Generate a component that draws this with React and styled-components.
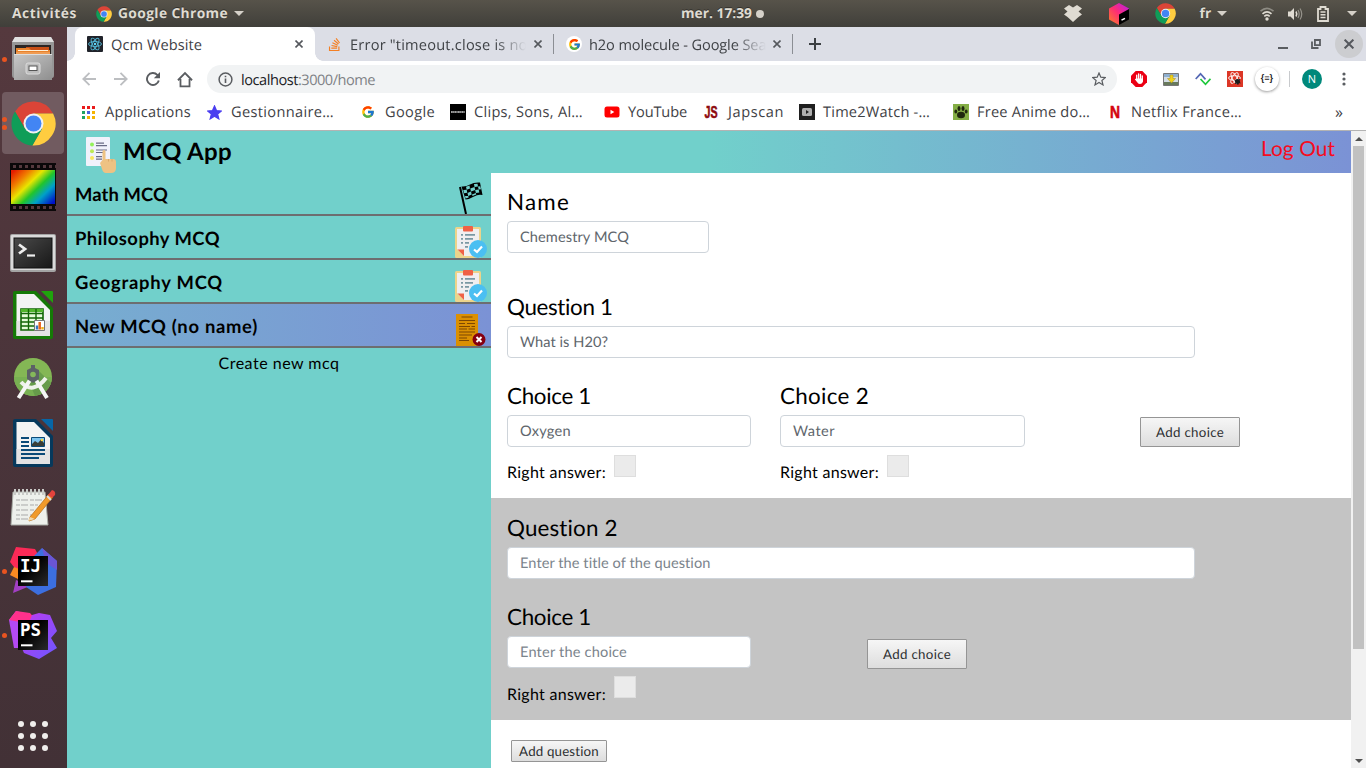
import React, { useLayoutEffect, useRef, useState } from "react";
import styled, { createGlobalStyle, css } from "styled-components";
import { FcGoogle } from "react-icons/fc";
import { FaStackOverflow } from "react-icons/fa";

const GlobalStyle = createGlobalStyle`
  *, *::before, *::after { box-sizing: border-box; }
  html, body, #root { height: 100%; }
  body { margin: 0; overflow: hidden; background: #fff; }
  button, input { font: inherit; }
  svg { flex: none; }
`;

const uiFont = `"Open Sans", "Noto Sans", sans-serif`;
const pageFont = `Lato, "Open Sans", sans-serif`;

/* ---------- text fitted to a given advance width ---------- */

const FitSpan = styled.span`
  display: inline-block;
  white-space: pre;
  text-rendering: geometricPrecision;
`;

function Fit({ w, children }) {
  const ref = useRef(null);
  const [spacing, setSpacing] = useState(0);
  useLayoutEffect(() => {
    const natural = ref.current.getBoundingClientRect().width;
    const count = Math.max(1, ref.current.textContent.length);
    setSpacing((w - natural) / count);
  }, [w]);
  return (
    <FitSpan ref={ref} style={{ letterSpacing: `${spacing}px` }}>
      {children}
    </FitSpan>
  );
}

/* ---------- desktop ---------- */

const Desktop = styled.div`
  width: 1366px;
  height: 768px;
  display: flex;
  flex-direction: column;
  overflow: hidden;
  font-family: ${uiFont};
`;

const TopBar = styled.header`
  height: 27px;
  flex: none;
  display: grid;
  grid-template-columns: 681px 1fr 310px;
  align-items: center;
  background: linear-gradient(#57534a, #403f3a);
  color: #dfdbd2;
  font-size: 13.8px;
  font-weight: 700;
  line-height: 26px;
  text-shadow: 0 -1px 0 rgba(0, 0, 0, 0.4);
`;

const TopLeft = styled.div`
  display: flex;
  align-items: center;
  padding-left: 12px;
`;

const AppMenu = styled.div`
  display: flex;
  align-items: center;
  margin-left: 19px;
  gap: 6px;
`;

const Clock = styled.div`
  display: flex;
  align-items: center;
  gap: 4px;
`;

const ClockDot = styled.span`
  width: 8px;
  height: 8px;
  border-radius: 50%;
  background: #d5d1c9;
`;

const Caret = styled.span`
  border: 5px solid transparent;
  border-top-color: #d5d1c9;
  border-bottom: 0;
`;

const Tray = styled.div`
  display: flex;
  align-items: center;
  height: 26px;
`;

const TrayItem = styled.div`
  width: ${(p) => p.$w}px;
  display: flex;
  align-items: center;
  justify-content: center;
  gap: 5px;
`;

const Body = styled.div`
  flex: 1;
  min-height: 0;
  display: flex;
`;

const Dock = styled.nav`
  width: 67px;
  flex: none;
  display: flex;
  flex-direction: column;
  background: linear-gradient(#55393e, #4c353b 40%, #423136);
`;

const DockSlot = styled.div`
  position: relative;
  height: 64px;
  display: flex;
  align-items: center;
  justify-content: center;
  padding-right: 1px;
  svg { position: relative; display: block; }
  ${(p) =>
    p.$active &&
    css`
      &::before {
        content: "";
        position: absolute;
        inset: 1px 3px 1px 2px;
        border-radius: 4px;
        background: #715b60;
      }
    `}
`;

const Pips = styled.div`
  position: absolute;
  left: 2px;
  top: 0;
  height: 64px;
  display: flex;
  flex-direction: column;
  justify-content: center;
  gap: 3px;
`;

const Pip = styled.i`
  width: 5px;
  height: 5px;
  border-radius: 50%;
  background: #e95420;
`;

const AppsGrid = styled.div`
  margin: 54px 0 0 18px;
  width: 30px;
  display: grid;
  grid-template-columns: repeat(3, 6px);
  gap: 6px;
  i { width: 6px; height: 6px; border-radius: 50%; background: #f0eeec; }
`;

/* ---------- browser ---------- */

const Browser = styled.section`
  flex: 1;
  min-width: 0;
  display: flex;
  flex-direction: column;
  background: #fff;
  color: #3f4246;
  font-size: 14.6px;
`;

const TabStrip = styled.div`
  height: 34px;
  flex: none;
  display: flex;
  align-items: center;
  background: #dcdee6;
  padding-left: 8px;
`;

const Tab = styled.div`
  position: relative;
  width: ${(p) => p.$w}px;
  height: 34px;
  display: flex;
  align-items: center;
  padding-left: 12px;
  gap: ${(p) => p.$gap || 8}px;
  line-height: 34px;
  ${(p) =>
    p.$active &&
    css`
      background: #fff;
      border-radius: 8px 8px 0 0;
      &::before, &::after {
        content: "";
        position: absolute;
        bottom: 0;
        width: 8px;
        height: 8px;
      }
      &::before { left: -8px; background: radial-gradient(circle at 0 0, transparent 7.5px, #fff 8px); }
      &::after { right: -8px; background: radial-gradient(circle at 100% 0, transparent 7.5px, #fff 8px); }
    `}
`;

const TabTitle = styled.div`
  width: ${(p) => p.$w}px;
  overflow: hidden;
  white-space: nowrap;
  ${(p) => p.$fade && css`mask-image: linear-gradient(90deg, #000 82%, transparent);`}
`;

const TabDivider = styled.i`
  width: 1px;
  height: 20px;
  background: #8b8e94;
`;

const NewTab = styled.div`
  flex: 1;
  padding-left: 16px;
  display: flex;
`;

const WindowButtons = styled.div`
  display: grid;
  grid-template-columns: 32px 33px 33px;
  justify-items: center;
  align-items: center;
  margin-right: 1px;
`;

const CloseWindow = styled.div`
  width: 28px;
  height: 28px;
  border-radius: 50%;
  background: #cccdd0;
  display: grid;
  place-items: center;
`;

const Toolbar = styled.div`
  height: 36px;
  flex: none;
  display: flex;
  align-items: center;
  padding-left: 6px;
`;

const ToolCell = styled.div`
  width: 32px;
  flex: none;
  display: grid;
  place-items: center;
`;

const Omnibox = styled.div`
  width: 910px;
  height: 28px;
  margin: 0 6px 0 6px;
  padding: 0 11px 0 11px;
  border-radius: 14px;
  background: #f1f3f4;
  display: flex;
  align-items: center;
  color: #202124;
`;

const Url = styled.div`
  flex: 1;
  margin-left: 8px;
  line-height: 28px;
  span + span { color: #7f8286; }
`;

const ToolDivider = styled.i`
  width: 1px;
  height: 16px;
  margin: 0 6px 0 6px;
  background: #c8cacd;
`;

const Avatar = styled.div`
  width: 20px;
  height: 20px;
  border-radius: 50%;
  background: #00897b;
  color: #fff;
  font-size: 11px;
  line-height: 20px;
  text-align: center;
`;

const JsonBadge = styled.div`
  width: 24px;
  height: 24px;
  border-radius: 50%;
  background: #fff;
  box-shadow: 0 1px 3px rgba(0, 0, 0, 0.4);
  color: #222;
  font: 700 9px/23px "Liberation Sans", sans-serif;
  text-align: center;
`;

const Bookmarks = styled.div`
  height: 34px;
  flex: none;
  display: flex;
  align-items: center;
  padding: 0 0 3px 14px;
  border-bottom: 1px solid #b3b3b3;
  line-height: 30px;
`;

const Bookmark = styled.div`
  width: ${(p) => p.$w}px;
  flex: none;
  display: flex;
  align-items: center;
  gap: ${(p) => p.$gap || 8}px;
`;

const More = styled.div`
  flex: 1;
  padding-left: 74px;
  font-size: 16px;
`;

/* ---------- web page ---------- */

const Viewport = styled.div`
  flex: 1;
  min-height: 0;
  display: flex;
  font-family: ${pageFont};
  color: #000;
`;

const Page = styled.div`
  width: 1284px;
  display: flex;
  flex-direction: column;
`;

const PageHeader = styled.header`
  height: 42px;
  flex: none;
  display: flex;
  align-items: flex-end;
  padding: 0 16px 0 18px;
  background: linear-gradient(90deg, #71d0cb 50%, #7b92d5);
`;

const Brand = styled.h1`
  flex: 1;
  margin: 0 0 0 6px;
  font-size: 24px;
  font-weight: 700;
  line-height: 42px;
`;

const LogOut = styled.a`
  color: #f60c20;
  font-size: 20.8px;
  line-height: 34px;
  align-self: flex-start;
`;

const Columns = styled.div`
  flex: 1;
  min-height: 0;
  display: flex;
`;

const Sidebar = styled.aside`
  width: 424px;
  flex: none;
  background: #71d0cb;
`;

const QuizItem = styled.div`
  height: ${(p) => (p.$first ? 43 : 44)}px;
  display: flex;
  align-items: flex-end;
  justify-content: space-between;
  padding: 0 4px 0 8px;
  border-bottom: 2px solid #6d6e70;
  font-size: 18.4px;
  font-weight: 700;
  line-height: 39px;
  background: ${(p) => (p.$selected ? "linear-gradient(90deg, #77aed0, #7b92d5)" : "transparent")};
  svg { display: block; }
`;

const CreateLink = styled.div`
  text-align: center;
  font-size: 16px;
  line-height: 30px;
`;

const Editor = styled.main`
  flex: 1;
  min-width: 0;
  background: #fff;
`;

const NameBlock = styled.div`
  height: 103px;
  padding: 16px 16px 0;
`;

const QuestionBlock = styled.section`
  height: 222px;
  padding: ${(p) => (p.$shaded ? 17 : 18)}px 24px 0 16px;
  background: ${(p) => (p.$shaded ? "#c4c4c4" : "transparent")};
`;

const FieldLabel = styled.label`
  display: block;
  height: 32px;
  font-size: 22.4px;
  line-height: 26px;
`;

const Input = styled.div`
  width: ${(p) => p.$w}px;
  height: 32px;
  padding: 0 12px;
  border: 1px solid #ced4da;
  border-radius: 4px;
  background: #fff;
  color: ${(p) => (p.$placeholder ? "#7b848c" : "#60666c")};
  font-size: 14.6px;
  line-height: 30px;
`;

const Choices = styled.div`
  display: grid;
  grid-template-columns: repeat(3, 273px);
  margin-top: 25px;
`;

const Answer = styled.div`
  display: flex;
  margin-top: 8px;
  gap: 8px;
  font-size: 16px;
  line-height: ${(p) => (p.$low ? 38 : 36)}px;
  height: 22px;
`;

const CheckBox = styled.span`
  width: 22px;
  height: 22px;
  border: 1px solid #dedede;
  background: #ebebeb;
`;

const Button = styled.button`
  display: block;
  width: ${(p) => p.$w}px;
  height: ${(p) => p.$h}px;
  margin: ${(p) => p.$m};
  padding: 0;
  border: 1px solid #959595;
  border-radius: 1px;
  background: linear-gradient(#f6f6f6, #dddddd);
  color: #2d2f31;
  font-size: 13.3px;
  line-height: ${(p) => p.$h - 2}px;
`;

const Scrollbar = styled.div`
  width: 15px;
  background: #f1f1f1;
  display: flex;
  flex-direction: column;
  align-items: center;
`;

const ScrollArrow = styled.div`
  height: 15px;
  display: grid;
  place-items: center;
`;

const ScrollThumb = styled.div`
  width: 11px;
  height: 503px;
  background: #c1c1c1;
`;

const ScrollTrack = styled.div`
  flex: 1;
`;

/* ---------- icons ---------- */

const Chrome = ({ size }) => (
  <svg width={size} height={size} viewBox="1.5 1.5 45 45">
    <path fill="#db4437" d="M5.54 12.03A22 22 0 0 1 43.6 14H24L15.34 29Z" />
    <path fill="#ffcd40" d="M43.6 14A22 22 0 0 1 22.86 45.97L32.66 29 24 14Z" />
    <path fill="#0f9d58" d="M22.86 45.97A22 22 0 0 1 5.54 12.03L15.34 29H32.66Z" />
    <circle cx="24" cy="24" r="10" fill="#f1f1f1" />
    <circle cx="24" cy="24" r="8" fill="#4285f4" />
  </svg>
);

const Dropbox = () => (
  <svg width="18" height="17" viewBox="0 0 18 17" fill="#dfdbd2">
    <path d="M5 0 9 2.500 13 0 18 3.500 14.500 6.500 18 9.500 14.500 12 9 17 3.500 12 0 9.500 3.500 6.500 0 3.500Z" />
  </svg>
);

const Toolbox = () => (
  <svg width="20" height="22" viewBox="0 0 20 22">
    <defs>
      <linearGradient id="tb" x1="0" y1="1" x2="1" y2="0">
        <stop offset="0" stopColor="#fd8224" />
        <stop offset=".5" stopColor="#fe2d75" />
        <stop offset="1" stopColor="#b51bf0" />
      </linearGradient>
    </defs>
    <path fill="url(#tb)" d="M10 0 20 5.500V11L10 22 0 16.500V5.500Z" />
    <path d="M10 11.500 20 6V16.500L10 22Z" fill="#000" />
    <path d="M12.500 17.200 16 15.300" stroke="#fff" strokeWidth="1.500" />
  </svg>
);

const Wifi = () => (
  <svg width="16" height="14" viewBox="0 0 16 14" fill="none" stroke="#dfdbd2" strokeWidth="1.600">
    <path d="M1.500 4.200Q8-1.300 14.500 4.200" stroke="#8d8b83" />
    <path d="M3.500 6.800Q8 2.800 12.500 6.800M5.300 9.300Q8 7.100 10.700 9.300" />
    <circle cx="8" cy="12" r="1.700" fill="#dfdbd2" stroke="none" />
  </svg>
);

const Volume = () => (
  <svg width="16" height="14" viewBox="0 0 16 14" fill="none" stroke="#dfdbd2">
    <path d="M1 4.500H3.500L7 1V13L3.500 9.500H1Z" fill="#dfdbd2" stroke="none" />
    <path d="M9 4.500Q10.500 7 9 9.500" strokeWidth="1.500" />
    <path d="M11 3Q13.300 7 11 11M13 1.500Q16.500 7 13 12.500" stroke="#96938b" strokeWidth="1.200" />
  </svg>
);

const Battery = () => (
  <svg width="12" height="16" viewBox="0 0 12 16" fill="none" stroke="#dfdbd2">
    <path d="M1 3H3.500V1H8.500V3H11V15H1Z" strokeWidth="1.800" />
    <path d="M3.500 6H8.500M3.500 8.800H8.500M3.500 11.600H8.500" strokeWidth="1.500" />
  </svg>
);

const Files = () => (
  <svg width="42" height="44" viewBox="0 0 42 44">
    <defs>
      <linearGradient id="fi" x1="0" y1="0" x2="1" y2="1">
        <stop offset="0" stopColor="#c8c8c8" />
        <stop offset="1" stopColor="#8f8f8f" />
      </linearGradient>
    </defs>
    <path d="M3 0H39L42 5V38Q42 41 40 41H2Q0 41 0 38V5Z" fill="#969696" />
    <path d="M3 0H39L42 5H0Z" fill="#e0e0e0" />
    <rect x="3" y="8" width="36" height="11" fill="#2b2523" />
    <path d="M14 10H37V18H14Z" fill="#c84f17" />
    <path d="M4 11H17L19 13H38V18H4Z" fill="#e8822c" />
    <path d="M6 13.500H36" stroke="#fff0d8" />
    <path d="M4 16H38" stroke="#f7b57a" />
    <path d="M2 17H40V43H2Z" fill="url(#fi)" />
    <path d="M2 17.500H40" stroke="#dedede" />
    <rect x="14" y="26" width="14" height="11" rx="2" fill="#bdbdbd" stroke="#ddd" />
    <rect x="17" y="29" width="8" height="4.500" fill="#fff" stroke="#555" />
  </svg>
);

const Film = () => (
  <svg width="46" height="48" viewBox="0 0 46 48">
    <defs>
      <linearGradient id="fm" x1="0" y1=".1" x2="1" y2=".9">
        <stop offset="0" stopColor="#e41c00" />
        <stop offset=".22" stopColor="#f07d00" />
        <stop offset=".4" stopColor="#e8e600" />
        <stop offset=".58" stopColor="#22c52a" />
        <stop offset=".76" stopColor="#00a0c8" />
        <stop offset="1" stopColor="#0012c8" />
      </linearGradient>
    </defs>
    <path fill="#0b0809" d="M0 0H46V48H0Z" />
    <path fill="url(#fm)" d="M1 7H45V41H1Z" />
    <path d="M3 3.500H46M3 44.500H46" stroke="#55393e" strokeWidth="3" strokeDasharray="3 3" />
  </svg>
);

const Terminal = () => (
  <svg width="46" height="42" viewBox="0 -4 46 42">
    <defs>
      <linearGradient id="tm" x1="0" y1="0" x2="1" y2="1">
        <stop offset="0" stopColor="#4a4a4a" />
        <stop offset="1" stopColor="#171717" />
      </linearGradient>
    </defs>
    <rect width="46" height="38" rx="2" fill="#a4a4a4" />
    <rect x="1" y="1" width="44" height="35" rx="1" fill="#dadada" />
    <rect x="4" y="4" width="38" height="30" fill="url(#tm)" stroke="#111" />
    <path d="M9 10.500 15 15 9 19.500" fill="none" stroke="#eee" strokeWidth="2.800" />
    <path d="M17 21.500H25" stroke="#eee" strokeWidth="2.200" />
  </svg>
);

const OfficeDoc = ({ dark, main, children }) => (
  <svg width="40" height="48" viewBox="0 0 40 48">
    <path d="M2 0H23L40 17V46Q40 48 38 48H2Q0 48 0 46V2Q0 0 2 0Z" fill={dark} />
    <path d="M28 0H39Q40 0 40 1V12Z" fill={main} />
    <path d="M3.500 3H21L37 19V45H3.500Z" fill="#f3f3f3" />
    <path d="M3.500 30H37V45H3.500Z" fill="#e3e3e3" />
    {children}
  </svg>
);

const Calc = () => (
  <OfficeDoc dark="#157a06" main="#1fa40c">
    <path d="M8 18H30V39H8Z" fill="#e6fbd9" stroke="#126605" strokeWidth="1.600" />
    <path d="M8 19.500H30" stroke="#52b52c" strokeWidth="3" />
    <path d="M8 22.500H30M8 27H30M8 31H30M8 35H30M15.500 18V39M23 18V39" stroke="#126605" strokeWidth="1.400" />
    <path d="M21.500 29.500H31.500V39.500H21.500Z" fill="#fff" stroke="#777" />
    <path d="M24 38.500V34.500" stroke="#3474c0" strokeWidth="2.500" />
    <path d="M26.700 38.500V31" stroke="#e8641b" strokeWidth="2.500" />
    <path d="M29.500 38.500V36" stroke="#f2b41b" strokeWidth="2.500" />
  </OfficeDoc>
);

const Writer = () => (
  <OfficeDoc dark="#06395c" main="#0766a6">
    <path d="M8 19H16M8 23H16M8 27H16M8 31H32M8 35H32M8 39H26" stroke="#0a4a78" strokeWidth="2" />
    <path d="M18.500 18.500H31.500V27.500H18.500Z" fill="#7cc3ee" stroke="#0a4a78" />
    <path d="M19 27V25L22 22 25 24 28 20.500 31 24V27Z" fill="#3a3f39" />
    <circle cx="29" cy="21" r="1.300" fill="#fbd83c" />
  </OfficeDoc>
);

const AndroidStudio = () => (
  <svg width="40" height="42" viewBox="0 0 40 42">
    <circle cx="20" cy="19" r="19" fill="#84b755" />
    <path d="M1 19A19 19 0 0 0 39 19Z" fill="#78b052" />
    <path d="M26 13 38 25Q34 36 22 38L16 24Z" fill="#5e9347" opacity=".7" />
    <path d="M8 24Q20 37 33 20" fill="none" stroke="#eef2ea" strokeWidth="4" />
    <path d="M17 22 5.500 40M23 22 34 40" stroke="#f5f5f5" strokeWidth="4" />
    <path d="M18 7H22V10L26 12V21L20 25 14 21V12L18 10Z" fill="#5c6166" />
    <circle cx="20" cy="16.500" r="2.800" fill="#85b85a" />
  </svg>
);

const Notes = () => (
  <svg width="46" height="38" viewBox="0 0 46 38">
    <path d="M3 4H35L38 37H1Z" fill="#eef0ec" stroke="#a7aaa4" />
    <path d="M5 7V1M9 7V1M13 7V1M17 7V1M21 7V1M25 7V1M29 7V1M33 7V1" stroke="#c9cac7" strokeWidth="2" />
    <path d="M6 12H32M6 17H28M6 22H24M6 27H22M6 31H18" stroke="#a9a9a9" strokeDasharray="4 1 7 2" />
    <path d="M20 29 39 6 43 9 25 31 19 33Z" fill="#f09a2b" stroke="#b86c16" strokeWidth=".7" />
    <path d="M38 7 42 2Q46 3 45 7L42 10Z" fill="#e4433d" />
    <path d="M37 8 41 12" stroke="#ddd" strokeWidth="2" />
    <path d="M20 29 25 31 18 33Z" fill="#f3d8a8" />
  </svg>
);

const IdeLogo = ({ letters, children }) => (
  <svg width="50" height="50" viewBox="0 0 50 50">
    <defs>
      <linearGradient id="vi" x1="0" y1="0" x2="1" y2="1">
        <stop offset="0" stopColor="#c23af0" />
        <stop offset="1" stopColor="#6b57ff" />
      </linearGradient>
      <linearGradient id="bk" x1="0" y1="0" x2="1" y2="1">
        <stop offset=".4" stopColor="#000" />
        <stop offset="1" stopColor="#2b2b2b" />
      </linearGradient>
    </defs>
    {children}
    <path d="M10 10H40V40H10Z" fill="url(#bk)" />
    <text x="12" y="26.300" fill="#fff" fontFamily="DejaVu Sans Mono, monospace" fontWeight="700" fontSize="17.500" textLength="21">
      {letters}
    </text>
    <path d="M13 35.300H24.500" stroke="#fff" strokeWidth="2" />
  </svg>
);

const Idea = () => (
  <IdeLogo letters="IJ">
    <path d="M8 1 27 3 33 14 10 26 2 16Z" fill="#fb2a57" />
    <path d="M2 29 6 21 14 24 12 34Z" fill="#f98a22" />
    <path d="M8 34 5 47 22 40Z" fill="#a23fc4" />
    <path d="M34 2 49 15 48 41 30 49 18 41 24 12Z" fill="#3c6fe0" />
    <path d="M34 2 42 9 49 15 49 24 38 17Z" fill="#6a55d4" />
  </IdeLogo>
);

const PhpStorm = () => (
  <IdeLogo letters="PS">
    <path d="M1 10 8 1 20 4 26 20 12 38H6Z" fill="#b44af3" />
    <path d="M8 1 22 3 30 12 12 12 1 10Z" fill="#ff318c" />
    <path d="M24 5 31 3 42 5 49 21 43 28 49 38 31 49 16 43 12 34Z" fill="url(#vi)" />
  </IdeLogo>
);

const ReactTile = () => (
  <svg width="16" height="16" viewBox="0 0 16 16" fill="none" stroke="#53b9d8" strokeWidth=".9">
    <rect width="16" height="16" rx="1" fill="#20232a" stroke="none" />
    <ellipse cx="8" cy="8" rx="6.500" ry="2.500" />
    <ellipse cx="8" cy="8" rx="6.500" ry="2.500" transform="rotate(60 8 8)" />
    <ellipse cx="8" cy="8" rx="6.500" ry="2.500" transform="rotate(120 8 8)" />
    <circle cx="8" cy="8" r="1.200" fill="#61dafb" stroke="none" />
  </svg>
);

const Cross = ({ size = 8, width = 1.6 }) => (
  <svg width={size} height={size} viewBox="0 0 8 8" stroke="#55585d" strokeWidth={width}>
    <path d="M.5.500 7.500 7.500M7.500.500.500 7.500" />
  </svg>
);

const GoogleDisc = styled.span`
  width: 16px;
  height: 16px;
  border-radius: 50%;
  background: #fff;
  display: grid;
  place-items: center;
`;

const Plus = () => (
  <svg width="12" height="12" viewBox="0 0 12 12" stroke="#3c4043" strokeWidth="2">
    <path d="M6 0V12M0 6H12" />
  </svg>
);

const Arrow = ({ flip }) => (
  <svg width="14" height="14" viewBox="0 0 14 14" fill="none" stroke="#bcbec1" strokeWidth="1.800" transform={flip ? "scale(-1 1)" : undefined}>
    <path d="M14 7H1.500M7.500.800 1.300 7 7.500 13.200" />
  </svg>
);

const Reload = () => (
  <svg width="14" height="14" viewBox="0 0 14 14" fill="none" stroke="#5a5d61" strokeWidth="1.900">
    <path d="M12.800 8.500A6 6 0 1 1 11.300 2.800L12 3.500" />
    <path d="M14 0V6.200H7.800Z" fill="#5a5d61" stroke="none" />
  </svg>
);

const Home = () => (
  <svg width="16" height="17" viewBox="0 0 17 17" fill="none" stroke="#5a5d61" strokeWidth="1.900">
    <path d="M1 9.300 8.500 1.700 16 9.300M3.700 8V15.800H13.300V8" />
  </svg>
);

const Info = () => (
  <svg width="15" height="15" viewBox="0 0 15 15" fill="none" stroke="#5a5d61">
    <circle cx="7.500" cy="7.500" r="6.400" strokeWidth="1.500" />
    <path d="M7.500 6.500V11M7.500 3.800V5.300" strokeWidth="1.600" />
  </svg>
);

const Star = ({ fill = "none", stroke = "#5a5d61", size = 14 }) => (
  <svg width={size} height={size} viewBox="0 0 14 14" fill={fill} stroke={stroke} strokeWidth="1.200">
    <path d="M7 1 8.800 5.200 13.300 5.600 9.900 8.500 11 12.900 7 10.500 3 12.900 4.100 8.500.700 5.600 5.200 5.200Z" />
  </svg>
);

const AdBlock = () => (
  <svg width="16" height="16" viewBox="0 0 16 16">
    <path d="M4.700 0H11.300L16 4.700V11.300L11.300 16H4.700L0 11.300V4.700Z" fill="#eb0014" />
    <path d="M5.700 9V4.200M7.600 8V2.800M9.500 8V3.400M11.300 10V5" stroke="#fff" strokeWidth="1.300" strokeLinecap="round" />
    <path d="M5.100 7.500H12V10Q11.600 13 8.800 13 7 13 6 11L3.800 8.300Z" fill="#fff" />
  </svg>
);

const Picture = () => (
  <svg width="16" height="13" viewBox="0 0 16 13">
    <path d="M.5.500H15.500V12.500H.500Z" fill="#d3dde6" stroke="#777" />
    <path d="M1 1H15V4H1Z" fill="#8fb0d0" />
    <path d="M1 9H15V12H1Z" fill="#687a5c" />
    <path d="M7 2H10V5.500H12.500L8.500 10 4.500 5.500H7Z" fill="#efd21c" stroke="#aa8b12" strokeWidth=".5" />
  </svg>
);

const Zigzag = () => (
  <svg width="16" height="14" viewBox="0 0 16 14" fill="none" strokeWidth="1.700">
    <path d="M.7 7 5.500 1.800 10.500 7.400" stroke="#5468b5" />
    <path d="M5.500 7 10.500 12.300 15.500 6.700" stroke="#1fc83c" />
  </svg>
);

const ReactBug = () => (
  <svg width="16" height="16" viewBox="0 0 16 16" fill="none">
    <rect width="16" height="16" fill="#dc3626" />
    <g stroke="#fff" strokeWidth=".9">
      <ellipse cx="7.500" cy="7" rx="6" ry="2.300" />
      <ellipse cx="7.500" cy="7" rx="6" ry="2.300" transform="rotate(60 7.500 7)" />
      <ellipse cx="7.500" cy="7" rx="6" ry="2.300" transform="rotate(120 7.500 7)" />
    </g>
    <circle cx="10.500" cy="10.500" r="2.500" fill="#1d1d1d" />
    <path d="M7.500 9 13.500 12M8 13 13 8M10 8 11 14" stroke="#1d1d1d" strokeWidth=".9" />
  </svg>
);

const Kebab = () => (
  <svg width="4" height="14" viewBox="0 0 4 14" fill="#5a5d61">
    <circle cx="2" cy="2" r="1.600" />
    <circle cx="2" cy="7" r="1.600" />
    <circle cx="2" cy="12" r="1.600" />
  </svg>
);

const AppsIcon = () => (
  <svg width="15" height="15" viewBox="0 0 15 15">
    {["#ea1c1c", "#ea1c1c", "#ea1c1c", "#1fa463", "#4a63e0", "#f5b400", "#1fa463", "#f5b400", "#f5b400"].map((c, i) => (
      <rect key={i} x={1 + (i % 3) * 5} y={1 + Math.floor(i / 3) * 5} width="3" height="3" fill={c} />
    ))}
  </svg>
);

const ClipsIcon = () => (
  <svg width="16" height="16" viewBox="0 0 16 16">
    <rect width="16" height="16" />
    <path d="M1 8H15" stroke="#cfcfcf" strokeWidth="1.600" strokeDasharray="1.800 .3 1.100 .3" />
  </svg>
);

const YouTubeIcon = () => (
  <svg width="16" height="16" viewBox="0 0 16 16">
    <rect x=".5" y="2.500" width="15" height="11" rx="2.500" fill="#f00" />
    <path d="M6.500 5.800 10.300 8 6.500 10.200Z" fill="#fff" />
  </svg>
);

const TextIcon = ({ text, color, width }) => (
  <svg width="16" height="16" viewBox="0 0 16 16" overflow="visible">
    <text x={(16 - width) / 2} y="14" fill={color} fontFamily="Liberation Sans, sans-serif" fontWeight="700" fontSize="17" textLength={width} lengthAdjust="spacingAndGlyphs" stroke={color} strokeWidth=".6">
      {text}
    </text>
  </svg>
);

const WatchIcon = () => (
  <svg width="16" height="16" viewBox="0 0 16 16">
    <rect width="16" height="16" fill="#1f1f1f" />
    <rect x="3" y="4" width="10" height="8" rx="1.500" fill="#aeaeae" />
    <path d="M7 6 10 8 7 10Z" fill="#1f1f1f" />
  </svg>
);

const PawIcon = () => (
  <svg width="16" height="16" viewBox="0 0 16 16">
    <rect width="16" height="16" fill="#84ae45" />
    <g fill="#20280f">
      <ellipse cx="8" cy="11" rx="4" ry="3.300" />
      <ellipse cx="2.800" cy="7.500" rx="1.400" ry="2.100" />
      <ellipse cx="6" cy="4.500" rx="1.500" ry="2.500" />
      <ellipse cx="10" cy="4.500" rx="1.500" ry="2.500" />
      <ellipse cx="13.200" cy="7.500" rx="1.400" ry="2.100" />
    </g>
  </svg>
);

const NetflixIcon = () => <TextIcon text="N" color="#d4060f" width={10} />;

const Minimize = () => (
  <svg width="10" height="12" viewBox="0 0 10 12"><path d="M0 10H10" stroke="#5a5d61" strokeWidth="2" /></svg>
);

const Restore = () => (
  <svg width="10" height="10" viewBox="0 0 10 10" fill="none" stroke="#5a5d61" strokeWidth="1.800">
    <path d="M3.900 1H9V6.100H3.900ZM1 2.500V9H7.500" />
  </svg>
);

const BrandIcon = () => (
  <svg width="32" height="36" viewBox="0 0 32 36">
    <rect x="1" y="0" width="24" height="29" rx="1" fill="#f1f1fb" />
    <circle cx="7" cy="7.500" r="2" fill="#93f15b" />
    <circle cx="7" cy="14.300" r="2" fill="#bdea55" />
    <circle cx="7" cy="21" r="2" fill="#f8e65e" />
    <path d="M11 6.200H19M11 8.700H22M11 13H22M11 15.500H19M11 19.700H17M11 22.200H17" stroke="#6a6b86" strokeWidth="1.200" />
    <path d="M17.500 14.500Q17.500 13 19 13T20.500 14.500V22H28Q31 22 31 25V31Q31 36 26 36H21Q18 36 17 32L15 26 17.500 23Z" fill="#eec283" />
    <path d="M23.500 22V24.500M27 22V24.500" stroke="#dca969" />
  </svg>
);

const FlagIcon = () => (
  <svg width="29" height="32" viewBox="0 0 29 32">
    <path d="M2 5 8 32" stroke="#000" strokeWidth="2" />
    <path d="M3.500 4.500Q8 5 12 2.500T22 .5L24.500 13Q20 12 16 14.500T7.500 17.500Z" fill="#000" />
    <g fill="#71d0cb">
      <path d="M8 4.800 11.500 3.500 12 6.500 8.700 7.800ZM16 2 19.500 1.700 20 4.500 16.500 5ZM5.300 8 8.700 7.800 9.300 10.800 6 11.200ZM12.300 6.500 16.500 5 17.200 8 13 9.500ZM20 4.500 22.300 4.300 23 7.200 20.700 7.500ZM9.500 11 13 9.500 13.700 12.500 10.200 14ZM17.200 8 20.700 7.500 21.300 10.500 17.900 11ZM7 14 10.200 14 10.700 15.500 7.500 16.500ZM14 12.500 17.900 11 18.200 12.500 14.500 14Z" />
    </g>
  </svg>
);

const ClipboardIcon = () => (
  <svg width="32" height="32" viewBox="0 0 32 32">
    <rect x="0" y="1" width="26" height="31" rx="1.500" fill="#ecd48b" />
    <path d="M2 3H24V30H9L2 23Z" fill="#f0eef0" />
    <path d="M2.500 23.500H9V30Z" fill="#ef6146" />
    <rect x="8" y="0" width="10" height="5.500" rx="1" fill="#ef6146" />
    <path d="M6 8.800H8M6 12.800H8M6 16.800H8M10 8.800H20M10 12.800H18M10 16.800H14M10 20.800H13" stroke="#7a98a3" strokeWidth="1.800" />
    <circle cx="23" cy="23" r="9" fill="#4bbff2" />
    <path d="M19 23.500 22 26 27 20.500" fill="none" stroke="#fff" strokeWidth="2.200" />
  </svg>
);

const DraftIcon = () => (
  <svg width="31" height="32" viewBox="0 0 31 32">
    <path d="M0 0H22V32H0Z" fill="#db9002" />
    <path d="M5.500 3H16.500M3 6.500H19M3 9.500H9M11 9.500H19M3 12.500H14M15.500 12.500H19M3 15H11M12.500 15H19M3 18H19M3 21H16M3 24H11M3 26.500H13" stroke="#7d4703" strokeWidth="1.200" />
    <circle cx="23" cy="25.500" r="6.500" fill="#860010" />
    <path d="M20.500 23 25.500 28M25.500 23 20.500 28" stroke="#fff" strokeWidth="2" />
  </svg>
);

/* ---------- data ---------- */

const dockApps = [
  { icon: <Files />, pips: 1 },
  { icon: <Chrome size={45} />, pips: 2, active: true },
  { icon: <Film /> },
  { icon: <Terminal /> },
  { icon: <Calc /> },
  { icon: <AndroidStudio /> },
  { icon: <Writer /> },
  { icon: <Notes /> },
  { icon: <Idea />, pips: 1 },
  { icon: <PhpStorm />, pips: 1 },
];

const bookmarks = [
  { name: "Applications", icon: <AppsIcon />, w: 126, text: 86, gap: 9 },
  { name: "Gestionnaire…", icon: <Star fill="#4a3df0" stroke="#4a3df0" size={15} />, w: 154, text: 103, gap: 9 },
  { name: "Google", icon: <FcGoogle size={14} />, w: 89, text: 50, gap: 10 },
  { name: "Clips, Sons, Al…", icon: <ClipsIcon />, w: 154, text: 109 },
  { name: "YouTube", icon: <YouTubeIcon />, w: 99, text: 59 },
  { name: "Japscan", icon: <TextIcon text="JS" color="#8e0a10" width={13} />, w: 96, text: 56, gap: 9 },
  { name: "Time2Watch -…", icon: <WatchIcon />, w: 154, text: 107 },
  { name: "Free Anime do…", icon: <PawIcon />, w: 154, text: 113 },
  { name: "Netflix France…", icon: <NetflixIcon />, w: 154, text: 111 },
];

const quizzes = [
  { name: "Math MCQ", w: 93, icon: <FlagIcon /> },
  { name: "Philosophy MCQ", w: 145, icon: <ClipboardIcon /> },
  { name: "Geography MCQ", w: 148, icon: <ClipboardIcon /> },
  { name: "New MCQ (no name)", w: 183, icon: <DraftIcon />, selected: true },
];

const questions = [
  {
    label: "Question 1", lw: 106, title: "What is H20?", tw: 88,
    choices: [
      { label: "Choice 1", lw: 84, value: "Oxygen", vw: 51, inputWidth: 244 },
      { label: "Choice 2", lw: 89, value: "Water", vw: 42, inputWidth: 245 },
    ],
  },
  {
    label: "Question 2", lw: 111, title: "Enter the title of the question", tw: 191, empty: true,
    choices: [{ label: "Choice 1", lw: 84, value: "Enter the choice", vw: 107, inputWidth: 244 }],
  },
];

function Question({ q }) {
  return (
    <QuestionBlock $shaded={q.empty}>
      <FieldLabel><Fit w={q.lw}>{q.label}</Fit></FieldLabel>
      <Input $w={688} $placeholder={q.empty}><Fit w={q.tw}>{q.title}</Fit></Input>
      <Choices>
        {q.choices.map((c) => (
          <div key={c.label}>
            <FieldLabel><Fit w={c.lw}>{c.label}</Fit></FieldLabel>
            <Input $w={c.inputWidth} $placeholder={q.empty}><Fit w={c.vw}>{c.value}</Fit></Input>
            <Answer $low={q.empty}>
              <Fit w={99}>Right answer:</Fit>
              <CheckBox />
            </Answer>
          </div>
        ))}
        <Button $w={100} $h={30} $m={q.empty ? "35px 0 0 87px" : "34px 0 0 87px"}><Fit w={68}>Add choice</Fit></Button>
      </Choices>
    </QuestionBlock>
  );
}

export default function App() {
  return (
    <Desktop>
      <GlobalStyle />
      <TopBar>
        <TopLeft>
          <Fit w={65}>Activités</Fit>
          <AppMenu>
            <Chrome size={16} />
            <Fit w={110}>Google Chrome</Fit>
            <Caret />
          </AppMenu>
        </TopLeft>
        <Clock>
          <Fit w={71}>mer. 17:39</Fit>
          <ClockDot />
        </Clock>
        <Tray>
          <TrayItem $w={34}><Dropbox /></TrayItem>
          <TrayItem $w={58}><Toolbox /></TrayItem>
          <TrayItem $w={34}><Chrome size={21} /></TrayItem>
          <TrayItem $w={62}><Fit w={12}>fr</Fit><Caret /></TrayItem>
          <TrayItem $w={46}><Wifi /></TrayItem>
          <TrayItem $w={9}><Volume /></TrayItem>
          <TrayItem $w={48}><Battery /></TrayItem>
          <Caret />
        </Tray>
      </TopBar>

      <Body>
        <Dock>
          {dockApps.map((app, i) => (
            <DockSlot key={i} $active={app.active}>
              {app.icon}
              {app.pips && (
                <Pips>
                  {Array.from({ length: app.pips }, (_, n) => <Pip key={n} />)}
                </Pips>
              )}
            </DockSlot>
          ))}
          <AppsGrid>
            {Array.from({ length: 9 }, (_, n) => <i key={n} />)}
          </AppsGrid>
        </Dock>

        <Browser>
          <TabStrip>
            <Tab $active $w={240}>
              <ReactTile />
              <TabTitle $w={176}><Fit w={91}>Qcm Website</Fit></TabTitle>
              <Cross />
            </Tab>
            <Tab $w={238}>
              <FaStackOverflow size={15} color="#f48024" />
              <TabTitle $w={176} $fade><Fit w={183}>Error "timeout.close is not</Fit></TabTitle>
              <Cross />
            </Tab>
            <TabDivider />
            <Tab $w={238} $gap={7}>
              <GoogleDisc><FcGoogle size={13} /></GoogleDisc>
              <TabTitle $w={177} $fade><Fit w={199}>h2o molecule - Google Search</Fit></TabTitle>
              <Cross />
            </Tab>
            <TabDivider />
            <NewTab><Plus /></NewTab>
            <WindowButtons>
              <Minimize />
              <Restore />
              <CloseWindow><Cross size={10} /></CloseWindow>
            </WindowButtons>
          </TabStrip>

          <Toolbar>
            <ToolCell><Arrow /></ToolCell>
            <ToolCell><Arrow flip /></ToolCell>
            <ToolCell><Reload /></ToolCell>
            <ToolCell><Home /></ToolCell>
            <Omnibox>
              <Info />
              <Url><Fit w={57}>localhost</Fit><Fit w={77}>:3000/home</Fit></Url>
              <Star />
            </Omnibox>
            <ToolCell><AdBlock /></ToolCell>
            <ToolCell><Picture /></ToolCell>
            <ToolCell><Zigzag /></ToolCell>
            <ToolCell><ReactBug /></ToolCell>
            <ToolCell><JsonBadge>{"{≡}"}</JsonBadge></ToolCell>
            <ToolDivider />
            <ToolCell><Avatar>N</Avatar></ToolCell>
            <ToolCell><Kebab /></ToolCell>
          </Toolbar>

          <Bookmarks>
            {bookmarks.map((b) => (
              <Bookmark key={b.name} $w={b.w} $gap={b.gap}>
                {b.icon}
                <Fit w={b.text}>{b.name}</Fit>
              </Bookmark>
            ))}
            <More>»</More>
          </Bookmarks>

          <Viewport>
            <Page>
              <PageHeader>
                <BrandIcon />
                <Brand><Fit w={109}>MCQ App</Fit></Brand>
                <LogOut><Fit w={74}>Log Out</Fit></LogOut>
              </PageHeader>
              <Columns>
                <Sidebar>
                  {quizzes.map((z, i) => (
                    <QuizItem key={z.name} $first={i === 0} $selected={z.selected}>
                      <Fit w={z.w}>{z.name}</Fit>
                      {z.icon}
                    </QuizItem>
                  ))}
                  <CreateLink><Fit w={121}>Create new mcq</Fit></CreateLink>
                </Sidebar>
                <Editor>
                  <NameBlock>
                    <FieldLabel><Fit w={63}>Name</Fit></FieldLabel>
                    <Input $w={202}><Fit w={109}>Chemestry MCQ</Fit></Input>
                  </NameBlock>
                  {questions.map((q) => <Question key={q.label} q={q} />)}
                  <Button $w={96} $h={22} $m="20px 0 0 20px"><Fit w={80}>Add question</Fit></Button>
                </Editor>
              </Columns>
            </Page>
            <Scrollbar>
              <ScrollArrow>
                <svg width="8" height="4" viewBox="0 0 8 4"><path d="M0 4 4 0 8 4Z" fill="#505050" /></svg>
              </ScrollArrow>
              <ScrollThumb />
              <ScrollTrack />
              <ScrollArrow>
                <svg width="8" height="4" viewBox="0 0 8 4"><path d="M0 0 4 4 8 0Z" fill="#505050" /></svg>
              </ScrollArrow>
            </Scrollbar>
          </Viewport>
        </Browser>
      </Body>
    </Desktop>
  );
}
